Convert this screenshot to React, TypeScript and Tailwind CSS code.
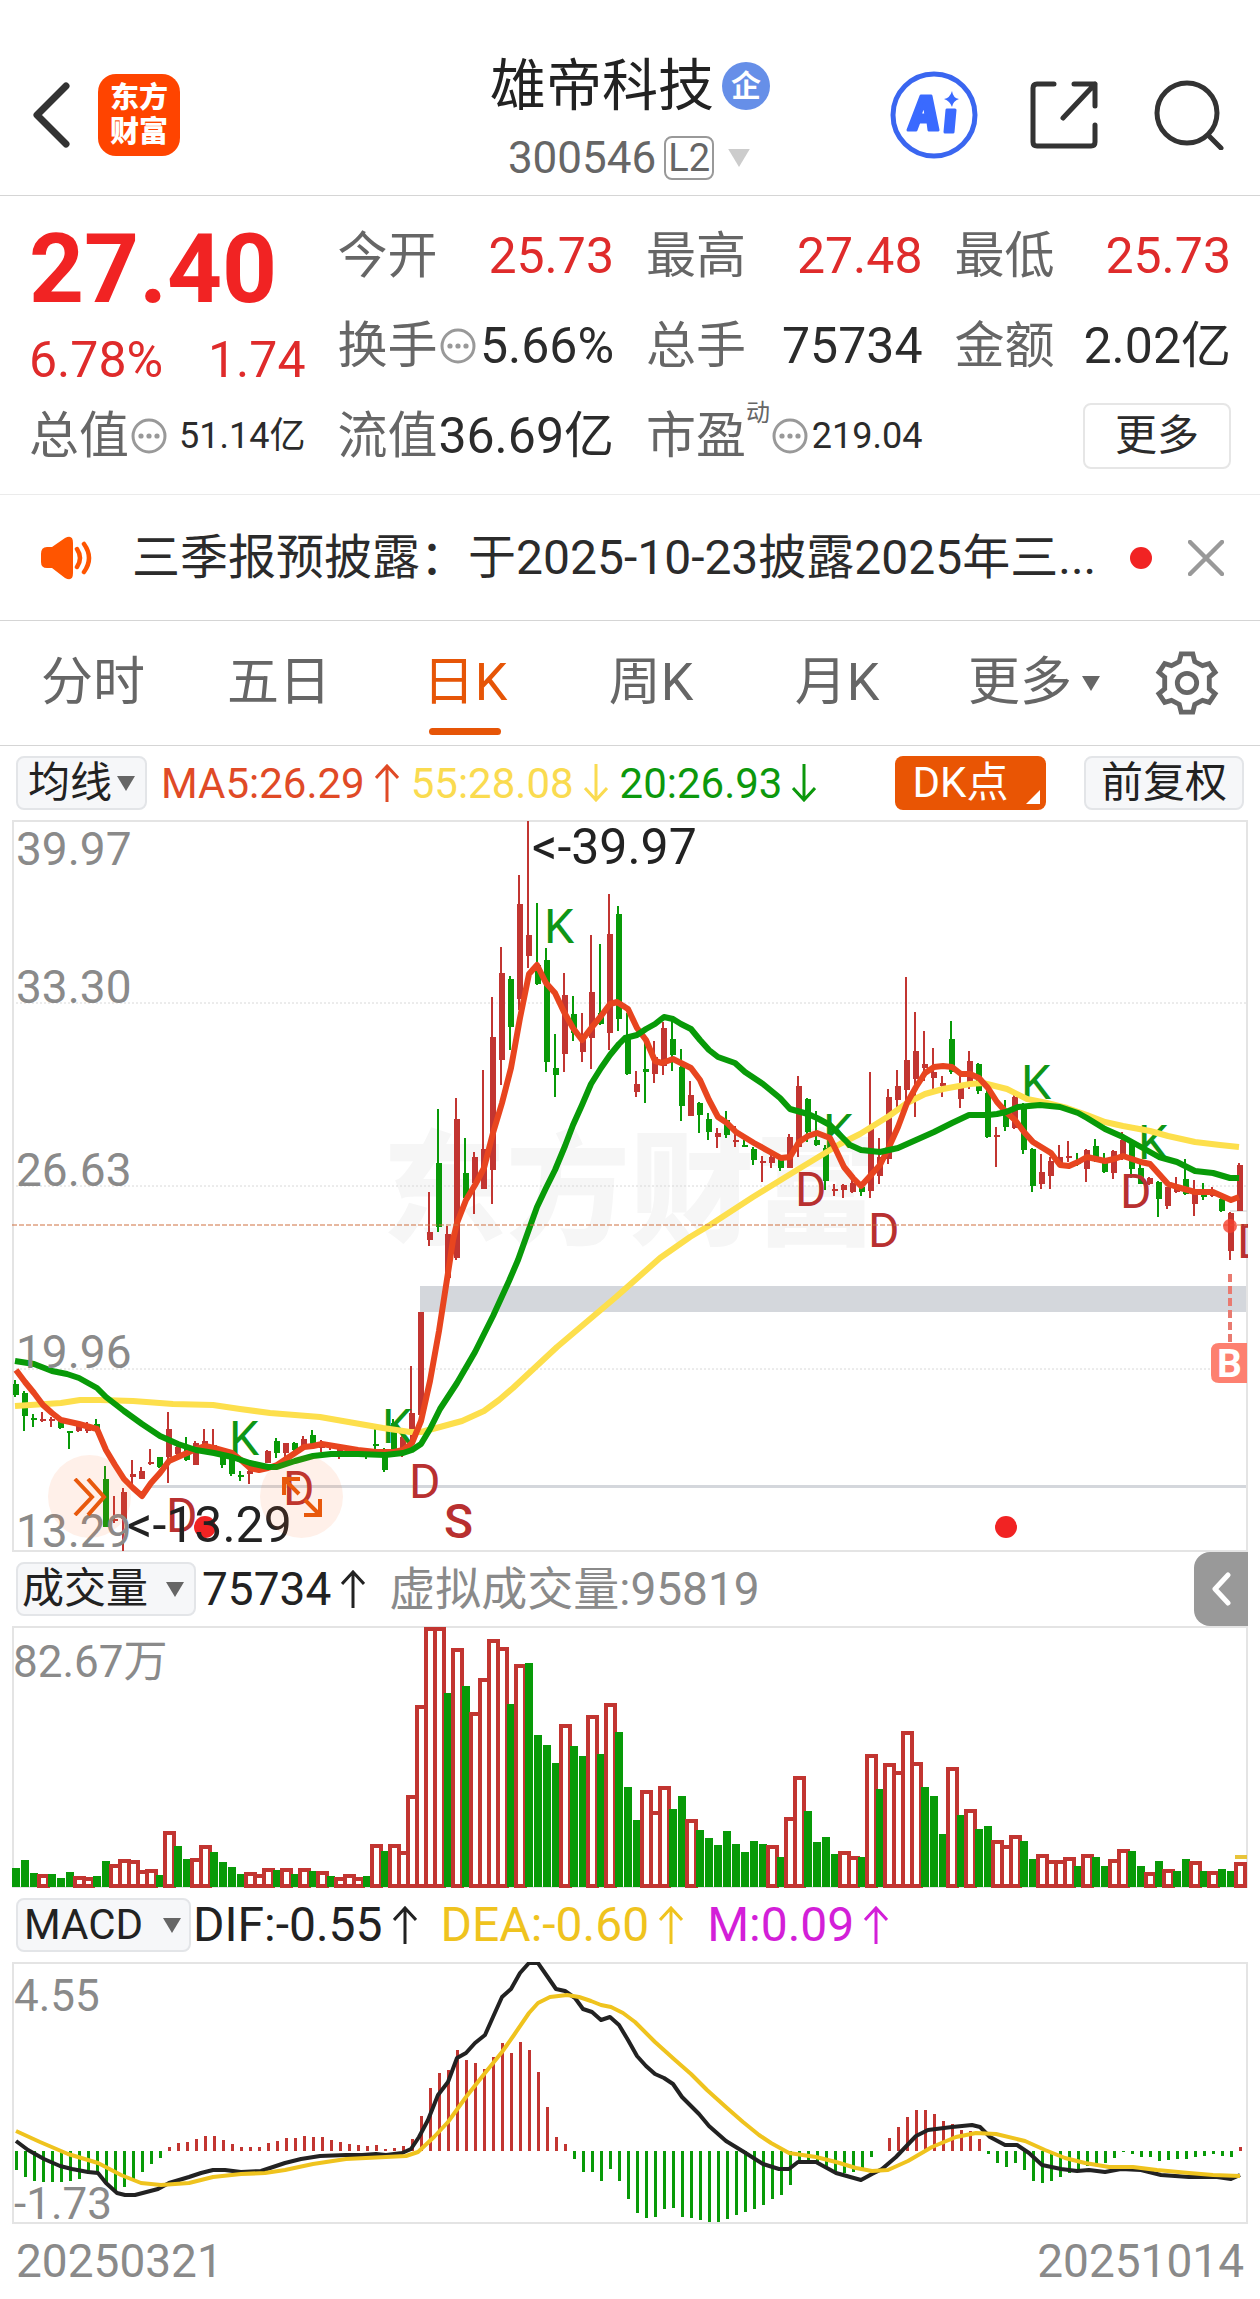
import { useState } from "react";
import clsx from "clsx";

const RED = "#c23531";
const GREEN = "#089a08";
const STEP = 9;

// up (1) or down (0), high, body top, body bottom, low - in plot units
const candles: [number, number, number, number, number][] = [
  [0,559,563,574,576],[0,570,572,595,610],[0,593,597,599,606],[1,591,598,599,601],[1,596,598,600,606],
  [0,596,598,607,608],[0,610,610,612,628],[1,600,602,610,611],[1,601,608,610,612],[0,598,603,610,611],
  [0,645,658,706,706],[1,675,698,700,702],[1,667,671,698,730],[1,639,653,656,663],[1,646,650,658,658],
  [1,628,641,643,644],[0,636,636,646,647],[1,591,608,636,662],[1,623,626,633,634],[0,616,627,639,640],
  [1,620,622,644,644],[1,608,620,629,632],[1,608,624,626,627],[0,627,628,644,647],[0,634,635,653,655],
  [0,650,654,656,660],[1,646,650,653,663],[1,645,647,649,651],[1,629,630,642,642],[0,617,620,632,637],
  [1,622,622,632,636],[0,621,622,629,630],[1,615,618,627,629],[0,609,614,624,624],[1,619,623,627,631],
  [1,623,624,627,629],[1,623,627,630,638],[0,627,629,632,636],[1,626,629,632,636],[0,627,630,634,638],
  [0,606,623,625,632],[0,627,629,649,651],[0,598,602,629,632],[1,612,616,632,636],[1,545,592,612,629],
  [1,491,491,594,594],[1,371,411,419,425],[0,288,342,406,411],[1,405,413,457,472],[1,277,298,437,439],
  [0,317,352,377,381],[1,331,336,362,393],[1,249,328,368,368],[1,176,216,349,383],[1,126,152,239,264],
  [0,155,158,206,229],[1,54,83,178,189],[1,0,114,135,147],[0,82,144,163,164],[0,127,139,241,251],
  [0,213,247,254,276],[1,152,174,233,251],[0,175,193,212,220],[1,192,219,231,241],[1,114,171,217,248],
  [0,123,192,203,204],[1,73,113,212,229],[0,85,93,198,210],[0,192,216,253,254],[1,250,263,271,276],
  [0,222,248,251,282],[1,220,236,253,262],[1,201,207,245,254],[0,197,218,234,250],[0,228,246,285,300],
  [1,260,274,295,295],[0,281,282,294,312],[0,292,298,311,319],[1,307,312,316,327],[0,290,299,314,317],
  [1,305,319,321,326],[0,319,324,326,326],[0,326,328,339,344],[1,335,340,342,361],[1,332,336,342,347],
  [0,336,338,347,350],[1,313,316,347,347],[1,255,265,326,336],[0,277,278,311,321],[0,290,319,324,325],
  [0,324,327,360,369],[1,363,368,369,375],[1,363,364,369,377],[1,357,362,371,372],[0,362,366,371,375],
  [1,251,306,370,377],[1,317,336,355,363],[1,268,276,338,343],[1,249,265,279,292],[1,156,239,269,279],
  [1,191,230,258,296],[1,210,243,247,260],[1,227,251,257,271],[1,255,262,265,276],[0,200,218,251,253],
  [1,254,267,278,287],[1,230,240,263,268],[0,242,243,270,273],[0,267,272,316,317],[1,306,314,316,346],
  [0,279,289,306,310],[1,274,276,307,308],[0,282,286,329,333],[0,327,328,365,371],[1,333,351,363,368],
  [1,336,340,355,368],[1,324,336,342,344],[1,320,335,336,341],[0,332,339,343,345],[1,328,329,348,361],
  [0,318,325,340,341],[0,332,339,351,352],[1,329,330,352,358],[1,311,319,338,339],[0,319,322,348,357],
  [0,342,347,363,363],[1,356,357,363,364],[0,360,361,378,396],[1,366,366,385,388],[1,356,364,371,372],
  [0,338,358,373,374],[1,359,372,383,395],[0,362,369,376,379],[1,366,372,375,376],[0,377,378,390,391],
  [1,391,392,430,439],[1,342,344,390,390],
];

// positive = up day, negative = down day
const volumes = [
  -19,-27,-14,13,-13,-9,-15,11,10,-11,-26,23,28,27,17,18,-12,56,-41,-28,29,42,-35,-25,-20,-13,15,13,19,-17,
  19,-13,19,-16,16,-11,10,13,10,-11,43,-36,43,36,92,182,260,260,-194,239,-201,175,209,248,240,-183,223,-224,-152,-142,
  -124,163,-141,-131,172,-133,184,-155,-100,-67,97,76,101,-78,-91,68,-57,-49,-42,-56,-43,-35,-46,-43,42,-30,70,111,-76,-45,
  -50,-33,36,31,-30,133,-98,124,116,156,125,-100,-91,-53,120,-72,78,-58,-61,47,42,52,-46,-28,33,27,27,30,-21,33,
  -30,-21,28,38,-36,-21,15,-26,18,-16,-28,26,-16,16,-18,-16,25,
];

const macd = [
  -19,-26,-30,-31,-31,-31,-30,-28,-23,-22,-32,-41,-36,-29,-21,-13,-7,4,8,9,12,15,15,11,7,4,4,4,8,10,
  13,13,15,14,14,11,9,7,6,5,6,2,3,5,12,35,63,78,81,101,91,88,82,94,108,98,109,101,79,44,
  14,7,-8,-21,-21,-30,-18,-30,-48,-62,-67,-66,-58,-57,-66,-67,-69,-71,-71,-68,-64,-61,-58,-54,-48,-44,-34,-13,-10,-13,
  -16,-20,-22,-21,-20,-6,0,13,24,34,41,41,37,30,27,21,20,12,-3,-12,-16,-12,-19,-30,-32,-30,-26,-22,-20,-15,
  -14,-12,-7,-1,-3,-6,-6,-10,-9,-8,-8,-6,-5,-3,-5,-6,4,
];

const ma5 = "4,549 13,561 22,572 31,584 40,592 49,599 67,603 85,608 94,629 103,644 112,658 121,667 130,675 139,662 148,652 157,640 166,636 175,632 184,628 193,625 202,627 220,632 229,639 238,647 247,649 256,647 265,644 274,638 283,632 292,626 301,625 310,623 328,626 346,629 364,631 382,631 391,629 400,622 409,600 418,560 427,510 438,439 441,419 445,402 454,379 463,364 472,347 481,312 490,282 499,247 508,197 517,153 525,144 534,162 543,172 552,191 561,207 570,219 580,206 589,195 598,183 605,181 616,188 625,207 634,219 643,240 650,242 661,238 679,247 688,259 697,279 706,296 715,302 724,311 742,322 760,332 769,337 778,336 787,321 796,315 805,312 818,317 823,327 832,346 841,357 849,365 859,354 868,344 877,326 886,306 895,282 904,266 913,252 922,246 931,245 940,246 949,253 958,253 967,257 976,267 985,281 994,291 1003,299 1012,311 1021,321 1039,332 1048,344 1057,345 1066,341 1075,336 1093,340 1102,338 1111,335 1120,338 1129,341 1138,343 1156,363 1165,366 1183,371 1201,371 1210,375 1219,379 1227,376";
const ma20 = "3,540 22,543 40,550 55,553 67,557 85,567 94,576 112,590 130,603 148,615 166,623 184,629 202,632 220,636 238,642 256,646 265,646 283,640 301,635 319,633 346,633 373,634 391,632 400,629 409,623 418,608 428,588 445,562 463,531 481,495 497,460 506,439 516,411 525,386 534,367 543,349 553,325 561,304 570,284 579,263 589,247 598,234 607,223 613,217 625,214 634,208 643,203 652,196 661,198 669,203 679,208 688,219 697,229 706,236 723,242 733,251 751,263 768,277 778,288 796,293 805,297 818,304 828,314 838,324 849,329 868,331 886,327 904,319 922,311 940,302 957,294 976,294 985,293 994,291 1006,286 1028,284 1048,286 1066,292 1075,297 1093,308 1111,316 1129,326 1147,336 1165,341 1183,350 1201,352 1218,357 1227,357";
const ma55 = "3,585 49,582 68,579 88,579 121,580 161,583 201,584 228,588 258,592 308,596 348,603 371,607 398,611 409,611 428,606 450,600 472,590 487,579 501,567 545,526 604,476 648,437 678,416 698,404 741,376 785,349 818,329 828,323 848,313 877,295 895,282 913,273 931,268 958,263 971,262 995,268 1015,278 1035,282 1055,287 1075,294 1093,301 1111,305 1138,310 1156,315 1183,321 1208,324 1227,326";
const dif = "4,178 16,187 32,196 48,203 60,206 76,209 86,210 94,220 105,230 113,232 123,232 146,226 157,220 177,214 189,210 201,207 213,207 229,209 249,208 261,204 273,200 289,196 308,193 334,192 350,192 364,191 374,192 390,190 399,186 407,174 416,157 426,132 436,119 445,95 454,90 463,80 473,72 481,54 490,34 499,26 508,10 517,0 526,0 535,13 544,26 553,28 563,35 571,46 580,49 589,57 598,54 607,62 616,77 625,93 634,103 643,111 652,115 661,121 670,134 687,151 697,163 714,178 732,189 751,201 767,206 777,206 786,199 804,199 824,210 849,217 860,211 870,206 884,194 904,173 916,167 940,164 960,162 968,164 978,174 993,182 1005,182 1017,190 1030,202 1049,206 1065,208 1077,207 1093,209 1109,206 1129,207 1149,212 1177,214 1205,214 1219,216 1228,212";
const dea = "4,168 28,179 56,191 86,200 109,212 129,220 149,222 177,220 201,214 229,211 253,210 273,207 301,201 334,196 374,194 394,193 406,189 422,174 436,159 454,134 473,110 490,89 502,72 517,50 526,40 538,34 555,32 567,34 579,38 589,42 599,44 611,50 623,59 643,79 663,97 679,111 695,127 715,145 731,159 747,172 759,180 777,190 804,194 824,199 844,205 860,208 876,207 896,198 920,184 944,174 964,170 984,171 1013,178 1033,187 1053,195 1073,200 1097,204 1121,204 1145,207 1177,210 1201,212 1228,213";

const signals: { t: "K" | "D" | "S"; x: number; y: number }[] = [
  { t: "K", x: 217, y: 634 }, { t: "K", x: 370, y: 622 }, { t: "K", x: 532, y: 122 },
  { t: "K", x: 811, y: 327 }, { t: "K", x: 1009, y: 278 }, { t: "K", x: 1126, y: 338 },
  { t: "D", x: 154, y: 711 }, { t: "D", x: 271, y: 684 }, { t: "D", x: 397, y: 677 },
  { t: "D", x: 783, y: 385 }, { t: "D", x: 856, y: 426 }, { t: "D", x: 1108, y: 387 },
  { t: "D", x: 1225, y: 437 }, { t: "S", x: 432, y: 717 },
];

const tabs = ["分时", "五日", "日K", "周K", "月K"];

function Triangle({ className }: { className?: string }) {
  return (
    <svg viewBox="0 0 18 15" className={clsx("w-[18px] h-[15px] fill-current", className)} aria-hidden="true">
      <path d="M0 0H18L9 15Z" />
    </svg>
  );
}

function Arrow({ down = false }: { down?: boolean }) {
  return (
    <svg viewBox="0 0 24 38" className="w-6 h-[38px] ml-2.5" fill="none" stroke="currentColor" strokeWidth="3" aria-label={down ? "下降" : "上升"}>
      <path d={down ? "M12 0V36M1 24L12 36L23 24" : "M12 38V2M1 14L12 2L23 14"} />
    </svg>
  );
}

function Info() {
  return (
    <button className="ml-0.5 shrink-0" aria-label="说明">
      <svg viewBox="0 0 36 36" className="block w-9 h-9">
        <circle cx="18" cy="18" r="16" fill="none" stroke="#999" strokeWidth="3" />
        <g fill="#999"><circle cx="10" cy="18" r="2.6" /><circle cx="18" cy="18" r="2.6" /><circle cx="26" cy="18" r="2.6" /></g>
      </svg>
    </button>
  );
}

function Stat({ label, value, tone = "text-[#2b2b2b]", info, sup, small }: {
  label: string; value: string; tone?: string; info?: boolean; sup?: string; small?: boolean;
}) {
  return (
    <div className="flex items-center h-[90px] whitespace-nowrap">
      <span className="text-[50px] text-[#666]">{label}</span>
      {sup && <sup className="self-start mt-1.5 text-[24px] leading-[32px] text-[#666] top-0">{sup}</sup>}
      {info && <Info />}
      <span className={clsx("ml-auto", small ? "text-[36px]" : "text-[50px]", tone)}>{value}</span>
    </div>
  );
}

function Picker({ label, options, className, mark }: { label: string; options: string[]; className: string; mark: string }) {
  return (
    <div className="relative shrink-0">
      <select
        aria-label={label}
        className={clsx("block appearance-none h-[54px] rounded-lg border-2 border-[#e3e5e8] bg-[#f6f7f9] text-[42px] leading-[50px] text-[#222]", className)}
      >
        {options.map((o) => <option key={o}>{o}</option>)}
      </select>
      <Triangle className={clsx("absolute top-5 text-[#666] pointer-events-none", mark)} />
    </div>
  );
}

function Frame({ height }: { height: number }) {
  return <rect x="1" y="0" width="1234" height={height} fill="none" stroke="#e4e4e4" strokeWidth="2" />;
}

function Header() {
  return (
    <header className="grid grid-cols-[1fr_auto_1fr] items-center pt-[50px] pb-px border-b border-[#d5d5d5]">
      <div className="flex items-center gap-7 pl-8 pb-3.5">
        <button aria-label="返回">
          <svg viewBox="0 0 38 66" className="block w-[38px] h-[66px]" fill="none" stroke="#333" strokeWidth="7" strokeLinecap="round" strokeLinejoin="round">
            <path d="M34 4L5 33L34 62" />
          </svg>
        </button>
        <a href="#home" className="flex flex-col items-center justify-center w-[82px] h-[82px] rounded-[18px] bg-[#ff4400] text-white text-[29px] leading-[34px] font-black">
          <span>东方</span>
          <span>财富</span>
        </a>
      </div>

      <div className="flex flex-col items-center">
        <div className="flex items-center gap-2 h-[72px]">
          <h1 className="text-[56px] leading-[72px] text-[#222]">雄帝科技</h1>
          <span className="flex items-center justify-center w-12 h-12 rounded-full bg-[#668fe8] text-white text-[30px] leading-none font-bold">企</span>
        </div>
        <div className="flex items-center h-[72px]">
          <span className="text-[44px] text-[#666]">300546</span>
          <span className="flex items-center h-11 ml-2 px-0.5 rounded-lg border-2 border-[#999] text-[38px] text-[#666]">L2</span>
          <button className="ml-3 text-[#ccc]" aria-label="切换股票"><Triangle className="!w-[26px] !h-[18px]" /></button>
        </div>
      </div>

      <div className="flex items-center justify-end pr-9 pb-3.5">
        <button className="mr-[52px]" aria-label="AI 助手">
          <svg viewBox="0 0 88 88" className="block w-[88px] h-[88px]">
            <circle cx="44" cy="44" r="41" fill="none" stroke="#3a66f0" strokeWidth="5" />
            <g fill="#3a6aff" stroke="#3a6aff" strokeWidth="3" strokeLinejoin="round">
              <path fillRule="evenodd" d="M31 25H41L48 59H39L38 51H29L26 59H18ZM34 33L30 44H36Z" />
              <path d="M57 39H65L63 61H55Z" />
              <path strokeWidth="0" d="M62 20Q63 27 69 28Q63 30 62 36Q60 30 54 28Q60 27 62 20Z" />
            </g>
          </svg>
        </button>
        <button className="mr-[56px]" aria-label="分享">
          <svg viewBox="0 0 68 68" className="block w-[68px] h-[68px]" fill="none" stroke="#333" strokeWidth="5" strokeLinecap="round" strokeLinejoin="round">
            <path d="M24 3H7Q3 3 3 7V61Q3 65 7 65H61Q65 65 65 61V44M44 3H65V25M65 3L33 37" />
          </svg>
        </button>
        <button aria-label="搜索">
          <svg viewBox="0 0 70 70" className="block w-[70px] h-[70px]" fill="none" stroke="#333" strokeWidth="5" strokeLinecap="round">
            <circle cx="33" cy="33" r="30" />
            <path d="M54 55L67 68" />
          </svg>
        </button>
      </div>
    </header>
  );
}

function Quote() {
  return (
    <section className="grid grid-cols-4 gap-x-8 px-[29px] pt-[15px] pb-[13px] border-b border-[#ebebeb]">
      <div className="row-span-2 flex flex-col">
        <strong className="h-[104px] pt-[13px] text-[96px] leading-[90px] font-bold text-[#f12323]">27.40</strong>
        <div className="flex justify-between items-end h-[76px] text-[50px] leading-[62px] text-[#df2b2b]">
          <span>6.78%</span>
          <span>1.74</span>
        </div>
      </div>
      <Stat label="今开" value="25.73" tone="text-[#df2b2b]" />
      <Stat label="最高" value="27.48" tone="text-[#df2b2b]" />
      <Stat label="最低" value="25.73" tone="text-[#df2b2b]" />
      <Stat label="换手" value="5.66%" info />
      <Stat label="总手" value="75734" />
      <Stat label="金额" value="2.02亿" />
      <Stat label="总值" value="51.14亿" info small />
      <Stat label="流值" value="36.69亿" />
      <Stat label="市盈" value="219.04" sup="动" info small />
      <div className="flex items-center justify-end h-[90px]">
        <button className="w-[148px] h-[66px] rounded-lg border-2 border-[#e6e6e6] text-[42px] leading-[60px] text-[#2b2b2b]">更多</button>
      </div>
    </section>
  );
}

function Notice() {
  return (
    <section className="flex items-center h-[126px] pl-10 pr-9 border-b border-[#d5d5d5]">
      <svg viewBox="0 0 54 44" className="w-[54px] h-11 shrink-0" fill="#ff5500" aria-hidden="true">
        <path d="M1 18Q1 11 7 11H12L25 2Q33 -2 33 7V37Q33 46 25 42L12 32H7Q1 32 1 26Z" />
        <path d="M37 13Q43 22 37 31M44 8Q54 22 44 36" fill="none" stroke="#ff5500" strokeWidth="4.5" strokeLinecap="round" />
      </svg>
      <a href="#notice" className="flex-1 min-w-0 ml-[38px] text-[48px] text-[#2b2b2b] truncate">三季报预披露：于2025-10-23披露2025年三...</a>
      <span className="w-[22px] h-[22px] rounded-full bg-[#f12323] shrink-0" />
      <button className="ml-9 shrink-0" aria-label="关闭">
        <svg viewBox="0 0 36 36" className="block w-9 h-9" stroke="#999" strokeWidth="4.5" strokeLinecap="round"><path d="M2 2L34 34M34 2L2 34" /></svg>
      </button>
    </section>
  );
}

function Tabs() {
  const [active, setActive] = useState("日K");
  return (
    <nav className="grid grid-cols-[186fr_186fr_186fr_186fr_186fr_208fr_98fr] items-center h-[125px] pr-6 border-b border-[#d5d5d5] text-[52px] text-[#666]">
      {tabs.map((t) => (
        <button key={t} onClick={() => setActive(t)} className={clsx("relative h-full", t === active && "text-[#e65507]")}>
          {t}
          {t === active && <span className="absolute left-1/2 -translate-x-1/2 bottom-2.5 w-[72px] h-[7px] rounded-full bg-[#e65507]" />}
        </button>
      ))}
      <button className="flex items-center justify-center gap-2.5 h-full">更多<Triangle /></button>
      <button className="justify-self-center" aria-label="设置">
        <svg viewBox="-3 -3 66 68" className="block w-16 h-[66px]" fill="none" stroke="#666" strokeWidth="5">
          <path d="M24 1H36L38 9L46 13L53 11L59 20L53 25V37L59 42L53 51L46 49L38 53L36 61H24L22 53L14 49L7 51L1 42L7 37V25L1 20L7 11L14 13L22 9Z" />
          <circle cx="30" cy="31" r="10" />
        </svg>
      </button>
    </nav>
  );
}

function PriceChart() {
  return (
    <section>
      <div className="flex items-center h-[74px] px-1 text-[42px] whitespace-nowrap">
        <Picker label="主图指标" options={["均线", "BOLL"]} className="w-[131px] pl-2.5" mark="right-3" />
        <span className="flex items-center ml-3.5 text-[#e04a26]">MA5:26.29<Arrow /></span>
        <span className="flex items-center ml-3 text-[#fadb50]">55:28.08<Arrow down /></span>
        <span className="flex items-center ml-3 text-[#0c980c]">20:26.93<Arrow down /></span>
        <button className="relative ml-auto w-[151px] h-[54px] rounded-lg bg-[#e95504] pr-5 leading-[54px] text-white">
          DK点
          <svg viewBox="0 0 14 14" className="absolute right-1.5 bottom-1.5 w-3.5 h-3.5" fill="#fff"><path d="M14 0V14H0Z" /></svg>
        </button>
        <button className="ml-[38px] w-40 h-[54px] rounded-lg border-2 border-[#e3e5e8] bg-[#f6f7f9] leading-[50px] text-[#222]">前复权</button>
      </div>

      <div className="relative">
        <svg viewBox="0 -1 1236 732" className="block w-full h-auto overflow-hidden" role="img" aria-label="日K线图">
          <text x="370" y="414" fontSize="124" fontWeight="900" fill="#f6f6f6">东方财富</text>
          {[182, 365, 548].map((y) => (
            <line key={y} x1="0" x2="1235" y1={y} y2={y} stroke="#d8d8d8" strokeWidth="1" strokeDasharray="2 2" />
          ))}
          <rect x="408" y="465" width="827" height="26" fill="#d4d7dc" />
          <rect x="138" y="664" width="1097" height="3" fill="#d4d7dc" />
          <Frame height={730} />
          <line x1="1218" x2="1235" y1="390" y2="390" stroke="#ccc" />

          {candles.map(([up, hi, top, bot, lo], i) => (
            <g key={i} fill={up ? RED : GREEN}>
              <rect x={3 + i * STEP - 1} y={hi} width="2" height={Math.max(lo - hi, 1)} />
              <rect x={4 + i * STEP - 3} y={top} width="6" height={Math.max(bot - top, 2)} />
            </g>
          ))}

          <g fontSize="48">
            {signals.map((s, i) => (
              <text key={i} x={s.x} y={s.y} fill={s.t === "K" ? "#0f9616" : "#b83030"} fontWeight={s.t === "S" ? 500 : 400}>{s.t}</text>
            ))}
          </g>

          <g fill="none" strokeWidth="6" strokeLinejoin="round">
            <polyline points={ma55} stroke="#fddf4c" />
            <polyline points={ma5} stroke="#e8451f" />
            <polyline points={ma20} stroke={GREEN} />
          </g>
          <line x1="0" x2="1235" y1="404" y2="404" stroke="#cf7040" strokeWidth="1" strokeDasharray="5 2" />

          <g fontSize="46" fill="#8a8a8a">
            <text x="4" y="44">39.97</text>
            <text x="4" y="182">33.30</text>
            <text x="4" y="365">26.63</text>
            <text x="4" y="547">19.96</text>
            <text x="4" y="726">13.29</text>
          </g>

          <circle cx="193" cy="706" r="11" fill="#f12323" />
          <circle cx="994" cy="706" r="11" fill="#f12323" />
          <g fontSize="50" fill="#222">
            <text x="520" y="43">&lt;-39.97</text>
            <text x="115" y="721">&lt;-13.29</text>
          </g>

          <circle cx="1218" cy="405" r="7" fill="#f5402d" fillOpacity="0.8" />
          <line x1="1218" x2="1218" y1="453" y2="521" stroke="#e97a70" strokeWidth="4" strokeDasharray="8 4" />
          <path d="M1235 522H1207Q1199 522 1199 530V554Q1199 562 1207 562H1235Z" fill="#fd8070" />
          <text x="1205" y="556" fontSize="39" fontWeight="700" fill="#fff">B</text>
        </svg>

        <button className="absolute left-9 bottom-[14px] flex items-center justify-center w-[83px] h-[83px] rounded-full bg-[#ff6a20]/10" aria-label="前进">
          <svg viewBox="0 0 34 38" className="w-[34px] h-[38px]" fill="none" stroke="#e8590c" strokeWidth="4"><path d="M2 1L19 19L2 37M15 1L31 19L15 37" /></svg>
        </button>
        <button className="absolute left-[248px] bottom-[14px] flex items-center justify-center w-[83px] h-[83px] rounded-full bg-[#ff6a20]/10" aria-label="全屏">
          <svg viewBox="0 0 40 40" className="w-10 h-10" fill="none" stroke="#e8590c" strokeWidth="4"><path d="M2 18V2H18M2 2L17 17M22 38H38V22M38 38L23 23" /></svg>
        </button>
      </div>
    </section>
  );
}

function VolumeChart() {
  return (
    <section>
      <div className="flex items-center h-[74px] pl-1 text-[46px] whitespace-nowrap">
        <Picker label="成交量指标" options={["成交量", "成交额"]} className="w-[180px] pl-1" mark="right-3" />
        <span className="flex items-center ml-1.5 text-[#222]">75734<Arrow /></span>
        <span className="ml-6 text-[#8a8a8a]">虚拟成交量:95819</span>
        <button className="flex items-center justify-center ml-auto w-[54px] h-[74px] rounded-l-2xl bg-[#999]" aria-label="展开">
          <svg viewBox="0 0 20 34" className="w-5 h-[34px]" fill="none" stroke="#fff" strokeWidth="5" strokeLinecap="round" strokeLinejoin="round"><path d="M17 3L4 17L17 31" /></svg>
        </button>
      </div>
      <svg viewBox="0 -1 1236 262" className="block w-full h-auto" role="img" aria-label="成交量图">
        <Frame height={260} />
        {volumes.map((v, i) =>
          v < 0 ? (
            <rect key={i} x={i * STEP} y={260 + v} width="8" height={-v} fill={GREEN} />
          ) : (
            <rect key={i} x={i * STEP} y={262 - v} width="9" height={v - 3} fill="#fff" stroke={RED} strokeWidth="4" />
          )
        )}
        <rect x="1223" y="228" width="12" height="4" fill="#e8c43a" />
        <text x="1" y="50" fontSize="44" fill="#8a8a8a">82.67万</text>
      </svg>
    </section>
  );
}

function MacdChart() {
  return (
    <section>
      <div className="flex items-center h-[74px] pl-1 text-[48px] whitespace-nowrap">
        <Picker label="副图指标" options={["MACD", "KDJ"]} className="w-[175px] pl-1.5" mark="right-2.5" />
        <span className="flex items-center ml-0.5 text-[#222]">DIF:-0.55<Arrow /></span>
        <span className="flex items-center ml-6 text-[#efc31e]">DEA:-0.60<Arrow /></span>
        <span className="flex items-center ml-6 text-[#d31fd8]">M:0.09<Arrow /></span>
      </div>
      <svg viewBox="0 -1 1236 262" className="block w-full h-auto" role="img" aria-label="MACD图">
        <Frame height={260} />
        {macd.map((v, i) => (
          <rect key={i} x={3 + i * STEP} y={v > 0 ? 188 - v : 188} width="3" height={Math.abs(v)} fill={v > 0 ? RED : GREEN} />
        ))}
        <g fill="none" strokeLinejoin="round">
          <polyline points={dif} stroke="#222" strokeWidth="4" />
          <polyline points={dea} stroke="#efc31e" strokeWidth="4" />
        </g>
        <g fontSize="44" fill="#8a8a8a">
          <text x="2" y="48">4.55</text>
          <text x="2" y="256">-1.73</text>
        </g>
      </svg>
      <div className="flex items-center justify-between h-[75px] px-1 text-[46px] text-[#8a8a8a]">
        <time dateTime="2025-03-21">20250321</time>
        <time dateTime="2025-10-14">20251014</time>
      </div>
    </section>
  );
}

export default function App() {
  return (
    <div className="bg-white font-[Roboto,'Noto_Sans_CJK_SC',sans-serif]">
      <Header />
      <Quote />
      <Notice />
      <Tabs />
      <main className="mx-3">
        <PriceChart />
        <VolumeChart />
        <MacdChart />
      </main>
    </div>
  );
}
